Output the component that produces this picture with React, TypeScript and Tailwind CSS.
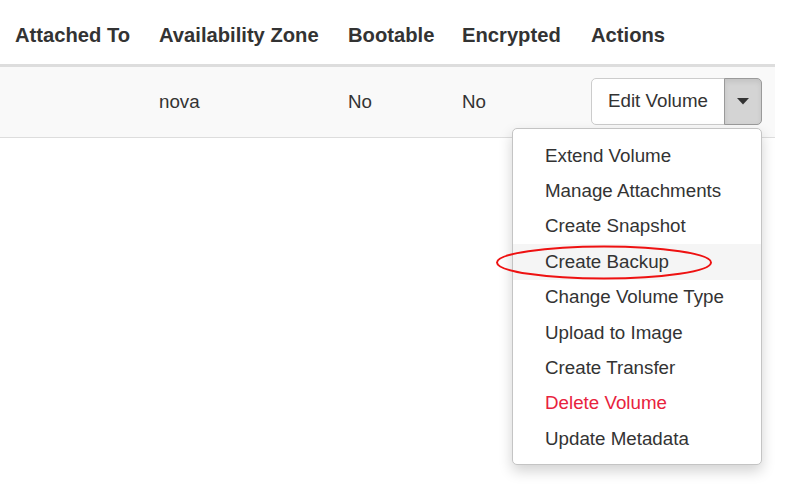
import React from "react";

const COLUMNS = [
  { label: "Attached To", w: "w-[148px]", pad: "pl-[15px]" },
  { label: "Availability Zone", w: "w-[189px]", pad: "pl-[11px]" },
  { label: "Bootable", w: "w-[114px]", pad: "pl-[11px]" },
  { label: "Encrypted", w: "w-[129px]", pad: "pl-[11px]" },
  { label: "Actions", w: "w-[195px]", pad: "pl-[11px]" },
];

const MENU_ITEMS = [
  "Extend Volume",
  "Manage Attachments",
  "Create Snapshot",
  "Create Backup",
  "Change Volume Type",
  "Upload to Image",
  "Create Transfer",
  "Delete Volume",
  "Update Metadata",
];

function ActionsMenu() {
  return (
    <div className="absolute left-[512px] top-[128px] w-[250px] rounded-[5px] border border-[#c4c4c4] bg-white pt-[9px] pb-[7px] shadow-[0_6px_14px_rgba(0,0,0,0.18)]">
      {MENU_ITEMS.map((item) => (
        <div
          key={item}
          className={`h-[35.4px] flex items-center pl-[32px] text-[18.75px] ${
            item === "Create Backup" ? "bg-[#f5f5f5]" : ""
          } ${item === "Delete Volume" ? "text-[#e8223d]" : "text-[#333]"}`}
        >
          {item}
        </div>
      ))}
    </div>
  );
}

export default function App() {
  return (
    <div
      className="relative w-[785px] h-[498px] bg-white overflow-hidden text-[#333]"
      style={{ fontFamily: '"Liberation Sans", Arial, sans-serif' }}
    >
      <div className="w-[775px]">
        {/* header */}
        <div className="flex h-[64px] items-center border-b-[3px] border-[#ddd] box-content">
          {COLUMNS.map((c) => (
            <div key={c.label} className={`${c.w} ${c.pad} shrink-0 text-[20.2px] font-bold pt-[7px]`}>
              {c.label}
            </div>
          ))}
        </div>
        {/* row */}
        <div className="flex h-[70px] items-center bg-[#f9f9f9] border-b border-[#ddd] box-content text-[18.75px]">
          <div className="w-[148px] shrink-0" />
          <div className="w-[189px] pl-[11px] shrink-0">nova</div>
          <div className="w-[114px] pl-[11px] shrink-0">No</div>
          <div className="w-[129px] pl-[11px] shrink-0">No</div>
          <div className="w-[195px] pl-[11px] shrink-0 flex pb-[2px]">
            <div className="h-[47px] w-[134px] flex items-center justify-center border border-[#ccc] bg-white rounded-l-[5px]">
              Edit Volume
            </div>
            <div className="h-[47px] w-[38px] -ml-px flex items-center justify-center border border-[#9a9a9a] bg-[#d4d4d4] rounded-r-[5px] shadow-[inset_0_3px_5px_rgba(0,0,0,0.08)]">
              <svg width="12" height="7" viewBox="0 0 12 7">
                <path d="M0 0 L12 0 L6 6.5 Z" fill="#333" />
              </svg>
            </div>
          </div>
        </div>
      </div>
      <ActionsMenu />
      <svg className="absolute left-[495px] top-[244px]" width="220" height="38" viewBox="0 0 220 38">
        <ellipse cx="109" cy="18.5" rx="107" ry="16" fill="none" stroke="#ee1111" strokeWidth="2" />
      </svg>
    </div>
  );
}
